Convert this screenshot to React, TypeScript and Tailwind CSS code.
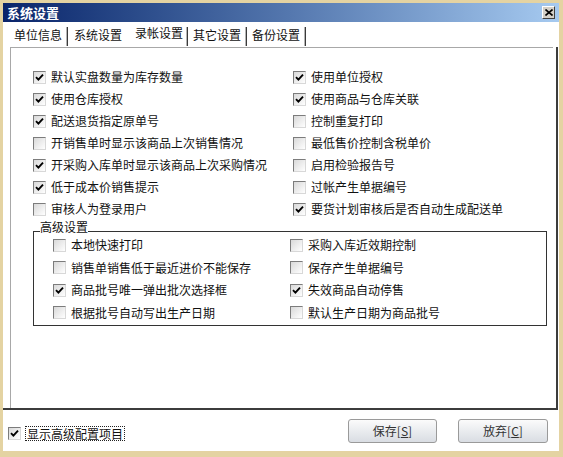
import React from "react";

function Box({ checked }: { checked: boolean }) {
  return (
    <span className="w-[13px] h-[13px] shrink-0 border border-t-[#7c7c7c] border-l-[#7c7c7c] border-b-[#d8d8d8] border-r-[#d8d8d8] bg-linear-to-br from-[#d9d9d9] to-white flex items-center justify-center">
      {checked && (
        <svg width="9" height="9" viewBox="0 0 9 9">
          <path d="M1 4.2 L3.4 6.6 L8 1.6" stroke="#000" strokeWidth="1.9" fill="none" />
        </svg>
      )}
    </span>
  );
}

function Item({ label, checked, h = "h-[22px]" }: { label: string; checked: boolean; h?: string }) {
  return (
    <div className={`${h} flex items-center gap-[5px]`}>
      <Box checked={checked} />
      <span className="text-[12px] leading-[14px] text-[#111] whitespace-nowrap">{label}</span>
    </div>
  );
}

const left: [string, boolean][] = [
  ["默认实盘数量为库存数量", true],
  ["使用仓库授权", true],
  ["配送退货指定原单号", true],
  ["开销售单时显示该商品上次销售情况", false],
  ["开采购入库单时显示该商品上次采购情况", true],
  ["低于成本价销售提示", true],
  ["审核人为登录用户", false],
];
const right: [string, boolean][] = [
  ["使用单位授权", true],
  ["使用商品与仓库关联", true],
  ["控制重复打印", false],
  ["最低售价控制含税单价", false],
  ["启用检验报告号", false],
  ["过帐产生单据编号", false],
  ["要货计划审核后是否自动生成配送单", true],
];
const gLeft: [string, boolean][] = [
  ["本地快速打印", false],
  ["销售单销售低于最近进价不能保存", false],
  ["商品批号唯一弹出批次选择框", true],
  ["根据批号自动写出生产日期", false],
];
const gRight: [string, boolean][] = [
  ["采购入库近效期控制", false],
  ["保存产生单据编号", false],
  ["失效商品自动停售", true],
  ["默认生产日期为商品批号", false],
];

function Sep() {
  return <span className="w-[2px] h-[19px] self-end mb-[1px] border-l border-[#b4b4b4] bg-[#3a3a3a]" />;
}

export default function App() {
  return (
    <div className="w-[563px] h-[457px] bg-[#e4d3a2] pt-[3px] pl-[3px] pr-[4px] pb-[6px] font-['Noto_Sans_CJK_SC','Noto_Sans',sans-serif] text-black">
      <div className="w-full h-full bg-white flex flex-col">
        {/* title bar */}
        <div className="h-[19px] shrink-0 bg-linear-to-r from-[#0a246a] to-[#a6caf0] flex items-center justify-between">
          <span className="pl-[4px] text-white font-bold text-[13px] leading-[15px]">系统设置</span>
          <span className="mr-[4px] w-[13px] h-[13px] bg-[#d4d0c8] border border-t-white border-l-white border-b-[#404040] border-r-[#404040] flex items-center justify-center">
            <svg width="8" height="7" viewBox="0 0 8 7">
              <path d="M0.5 0.5 L7.5 6.5 M7.5 0.5 L0.5 6.5" stroke="#000" strokeWidth="1.6" />
            </svg>
          </span>
        </div>
        {/* tabs */}
        <div className="h-[25px] shrink-0 flex items-center text-[12px] leading-[14px] text-[#111]">
          <span className="ml-[11px] w-[48px]">单位信息</span>
          <span className="ml-[4px] flex self-stretch"><Sep /></span>
          <span className="ml-[6px] w-[48px]">系统设置</span>
          <span className="ml-[13px] w-[48px] pb-[4px]">录帐设置</span>
          <span className="ml-[3px] flex self-stretch"><Sep /></span>
          <span className="ml-[5px] w-[48px]">其它设置</span>
          <span className="ml-[4px] flex self-stretch"><Sep /></span>
          <span className="ml-[5px] w-[48px]">备份设置</span>
          <span className="ml-[4px] flex self-stretch"><Sep /></span>
        </div>
        {/* panel */}
        <div className="h-[363px] shrink-0 mr-[1px] pl-[7px] border-r-2 border-b-2 border-[#3c3c3c] flex">
          <div className="flex-1 mr-[3px] border-t border-l border-[#a8a8a8] pt-[18px] pl-[22px]">
            <div className="grid grid-cols-[260px_1fr]">
              <div className="flex flex-col">
                {left.map(([l, c]) => (
                  <Item key={l} label={l} checked={c} />
                ))}
              </div>
              <div className="flex flex-col">
                {right.map(([l, c]) => (
                  <Item key={l} label={l} checked={c} />
                ))}
              </div>
            </div>
            <div className="relative mt-[11px] w-[514px] border border-[#333] pt-[2px] pb-[1px] pl-[19px]">
              <span className="absolute left-[6px] top-[-11px] bg-white text-[12px] leading-[12px] text-[#111]">高级设置</span>
              <div className="grid grid-cols-[237px_1fr]">
                <div className="flex flex-col">
                  {gLeft.map(([l, c]) => (
                    <Item key={l} label={l} checked={c} h="h-[22.5px]" />
                  ))}
                </div>
                <div className="flex flex-col">
                  {gRight.map(([l, c]) => (
                    <Item key={l} label={l} checked={c} h="h-[22.5px]" />
                  ))}
                </div>
              </div>
            </div>
          </div>
        </div>
        {/* bottom */}
        <div className="flex-1 flex items-center">
          <div className="ml-[5px] mt-[6px] flex items-center gap-[4px]">
            <Box checked={true} />
            <span className="border border-dotted border-[#222] px-[1px] text-[12px] leading-[13px] text-[#111]">显示高级配置项目</span>
          </div>
          <div className="ml-auto mr-[11px] flex gap-[21px]">
            <button className="w-[89px] h-[24px] rounded-[3px] border border-[#9a9a9a] bg-linear-to-b from-[#fbfbfb] to-[#d9dde3] text-[12px] leading-[14px] text-[#333]">
              保存[<span className="underline">S</span>]
            </button>
            <button className="w-[90px] h-[24px] rounded-[3px] border border-[#9a9a9a] bg-linear-to-b from-[#fbfbfb] to-[#d9dde3] text-[12px] leading-[14px] text-[#333]">
              放弃[<span className="underline">C</span>]
            </button>
          </div>
        </div>
      </div>
    </div>
  );
}
